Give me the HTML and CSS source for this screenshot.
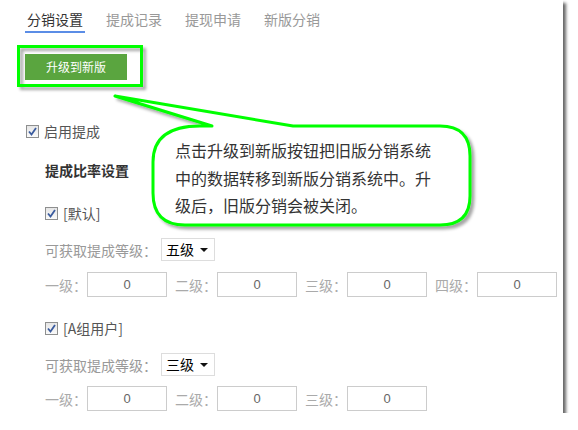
FILE: index.html
```html
<!DOCTYPE html>
<html lang="zh-CN">
<head>
  <meta charset="UTF-8">
  <title>分销设置</title>
  <link rel="stylesheet" href="styles.css">
</head>
<body>
  <div class="window">
    <div class="tabs">
      <div class="tab active">分销设置</div>
      <div class="tab">提成记录</div>
      <div class="tab">提现申请</div>
      <div class="tab">新版分销</div>
    </div>

    <div class="upgrade">升级到新版</div>

    <div class="check-row">
      <span class="check"><svg viewBox="0 0 11 11"><path d="M2 5.5 L4.5 8.5 L9 2"/></svg></span>
      <span>启用提成</span>
    </div>

    <div class="section">
      <div class="heading">提成比率设置</div>

      <div class="check-row group">
        <span class="check"><svg viewBox="0 0 11 11"><path d="M2 5.5 L4.5 8.5 L9 2"/></svg></span>
        <span>[默认]</span>
      </div>
      <div class="level-row">
        <span class="label">可获取提成等级：</span>
        <div class="select">五级<span class="caret"></span></div>
      </div>
      <div class="rate-row">
        <span class="rate-label">一级：</span><input class="rate" value="0">
        <span class="rate-label">二级：</span><input class="rate" value="0">
        <span class="rate-label">三级：</span><input class="rate" value="0">
        <span class="rate-label">四级：</span><input class="rate" value="0">
      </div>

      <div class="check-row group">
        <span class="check"><svg viewBox="0 0 11 11"><path d="M2 5.5 L4.5 8.5 L9 2"/></svg></span>
        <span>[A组用户]</span>
      </div>
      <div class="level-row">
        <span class="label">可获取提成等级：</span>
        <div class="select">三级<span class="caret"></span></div>
      </div>
      <div class="rate-row">
        <span class="rate-label">一级：</span><input class="rate" value="0">
        <span class="rate-label">二级：</span><input class="rate" value="0">
        <span class="rate-label">三级：</span><input class="rate" value="0">
      </div>
    </div>

    <!-- 标注层 -->
    <svg class="annotation" width="563" height="413" viewBox="0 0 563 413">
      <defs>
        <filter id="shade" x="-10%" y="-10%" width="130%" height="140%">
          <feDropShadow dx="3" dy="3" stdDeviation="1.6" flood-color="#000" flood-opacity="0.35"/>
        </filter>
      </defs>
      <rect x="18.5" y="46.5" width="123" height="39" fill="none" stroke="#00ff00" stroke-width="3" filter="url(#shade)"/>
      <path d="M293 126 L440 126 Q470 126 470 156 L470 196 Q470 225 440 225 L185 225 Q153 225 153 193 L153 162 Q153 126 200 126 L212 126 L115 96 Z"
            fill="#fff" stroke="#00ff00" stroke-width="3" stroke-linejoin="round" filter="url(#shade)"/>
    </svg>
    <div class="callout-text">点击升级到新版按钮把旧版分销系统中的数据转移到新版分销系统中。升级后，旧版分销会被关闭。</div>
  </div>
</body>
</html>
```

FILE: styles.css
```css
body {
  margin: 0;
  background: #fff;
  font-family: "Noto Sans CJK SC", "Liberation Sans", sans-serif;
  font-size: 14px;
  color: #555;
}

.window {
  position: relative;
  width: 563px;
  height: 413px;
  background: #fff;
  box-shadow: 3px 3px 3px rgba(0, 0, 0, 0.6);
}

.tabs {
  display: flex;
  gap: 19px;
  padding-left: 25px;
}

.tab {
  padding: 9px 2px 2px;
  line-height: 20px;
  color: #999;
  border-bottom: 2px solid transparent;
}

.tab.active {
  color: #333;
  border-bottom-color: #5b8de6;
}

.upgrade {
  margin: 21px 0 0 25px;
  width: 102px;
  height: 26px;
  line-height: 26px;
  background: #5aa53f;
  color: #fff;
  font-size: 12px;
  text-align: center;
}

.check-row {
  display: flex;
  align-items: center;
  gap: 5px;
  height: 20px;
  margin: 41px 0 0 26px;
}

.check {
  width: 11px;
  height: 11px;
  border: 1px solid #8e8f8f;
  background: linear-gradient(#e6e6e6, #fafafa);
  display: flex;
}

.check svg {
  width: 11px;
  height: 11px;
  fill: none;
  stroke: #3a5b9e;
  stroke-width: 1.8;
}

.section {
  padding-left: 45px;
}

.heading {
  margin-top: 19px;
  height: 20px;
  line-height: 20px;
  font-weight: bold;
  color: #333;
}

.group {
  margin: 23px 0 0 0;
}

.section .group ~ .group {
  margin-top: 21px;
}

.level-row {
  display: flex;
  align-items: center;
  margin-top: 15px;
  height: 23px;
}

.label {
  width: 116px;
  color: #999;
}

.select {
  position: relative;
  box-sizing: border-box;
  width: 54px;
  height: 23px;
  line-height: 21px;
  border: 1px solid #ddd;
  padding-left: 4px;
  color: #000;
}

.caret {
  position: absolute;
  right: 6px;
  top: 9px;
  border-left: 4px solid transparent;
  border-right: 4px solid transparent;
  border-top: 4px solid #111;
}

.rate-row {
  display: flex;
  align-items: center;
  margin-top: 11px;
  height: 25px;
}

.rate-row:last-child {
  margin-top: 10px;
}

.rate-label {
  flex-shrink: 0;
  width: 42px;
  color: #aaa;
  white-space: nowrap;
}

.rate {
  flex-shrink: 0;
  box-sizing: border-box;
  width: 80px;
  height: 25px;
  margin: 0 8px 0 0;
  border: 1px solid #ccc;
  font-family: "Liberation Sans", sans-serif;
  font-size: 13px;
  color: #666;
  text-align: center;
  padding: 0;
}

.annotation {
  position: absolute;
  left: 0;
  top: 0;
}

.callout-text {
  position: absolute;
  left: 175px;
  top: 137px;
  width: 258px;
  font-size: 16px;
  line-height: 27.5px;
  color: #333;
}
```
